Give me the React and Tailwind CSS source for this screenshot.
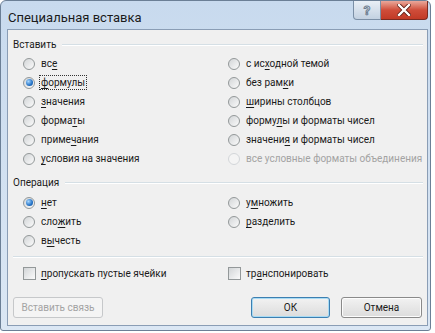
import React from "react";

const font = { fontFamily: 'Roboto, "Noto Sans", sans-serif' };

function Label({ text, u, disabled }) {
  // u = index of the underlined access-key letter
  return (
    <span className={`whitespace-nowrap ${disabled ? "text-[#a3a3a3]" : "text-[#1b1b1b]"}`}>
      {text.slice(0, u)}
      <span className="underline underline-offset-2">{text[u]}</span>
      {text.slice(u + 1)}
    </span>
  );
}

function Radio({ checked, disabled }) {
  return (
    <span
      className={`w-[12px] h-[12px] rounded-full border flex items-center justify-center shrink-0 ${
        disabled
          ? "border-[#d3d6d9] bg-[#f4f4f4]"
          : "border-[#939899] bg-gradient-to-br from-[#d2d5d7] to-[#fbfbfb]"
      }`}
    >
      {checked && (
        <span className="w-[7px] h-[7px] rounded-full bg-[radial-gradient(circle_at_35%_35%,#a8d8ff,#2472c6_60%,#0d4a8f)]" />
      )}
    </span>
  );
}

function RadioRow({ text, u, checked, disabled, focus }) {
  return (
    <div className="h-[19px] flex items-center gap-[5px]">
      <Radio checked={checked} disabled={disabled} />
      <span className={`leading-[13px] px-[1px] ${focus ? "outline outline-1 outline-dotted outline-[#333]" : ""}`}>
        <Label text={text} u={u} disabled={disabled} />
      </span>
    </div>
  );
}

function Check({ text, u }) {
  return (
    <div className="h-[19px] flex items-center gap-[5px]">
      <span className="w-[13px] h-[13px] border border-[#939899] bg-gradient-to-br from-[#d2d5d7] to-[#fbfbfb] shrink-0" />
      <Label text={text} u={u} />
    </div>
  );
}

function Header({ title }) {
  return (
    <div className="h-[19px] flex items-center gap-[6px]">
      <span className="text-[#1b1b1b]">{title}</span>
      <div className="flex-1 h-[2px] border-t border-[#d5dfe5] border-b border-b-white mr-[4px]" />
    </div>
  );
}

function Button({ children, primary, disabled, className = "" }) {
  const base = "h-[21px] rounded-[3px] border flex items-center justify-center whitespace-nowrap";
  const style = disabled
    ? "border-[#c6c8ca] bg-[#f4f4f4] text-[#a3a3a3]"
    : primary
    ? "border-[#3c7fb1] bg-gradient-to-b from-[#f2f2f2] to-[#dcdcdc] text-[#1b1b1b] shadow-[inset_0_0_0_1px_#a8dbf4]"
    : "border-[#8a8a8a] bg-gradient-to-b from-[#f2f2f2] to-[#dcdcdc] text-[#1b1b1b] shadow-[inset_0_0_0_1px_#fcfcfc]";
  return <div className={`${base} ${style} ${className}`}>{children}</div>;
}

export default function App() {
  const left = [
    { text: "все", u: 2 },
    { text: "формулы", u: 0, checked: true, focus: true },
    { text: "значения", u: 0 },
    { text: "форматы", u: 5 },
    { text: "примечания", u: 5 },
    { text: "условия на значения", u: 0 },
  ];
  const right = [
    { text: "с исходной темой", u: 4 },
    { text: "без рамки", u: 7 },
    { text: "ширины столбцов", u: 0 },
    { text: "формулы и форматы чисел", u: 5 },
    { text: "значения и форматы чисел", u: 7 },
    { text: "все условные форматы объединения", u: 99, disabled: true },
  ];

  return (
    <div className="w-[435px] h-[333px] bg-white text-[10px]" style={font}>
      <div className="w-[431px] h-[331px] rounded-t-[6px] rounded-b-[3px] border border-[#6b7f96] bg-gradient-to-b from-[#c8daee] to-[#dbe7f4] flex flex-col">
        {/* title bar */}
        <div className="h-[28px] shrink-0 flex items-start">
          <div className="pl-[7px] pt-[7px] text-[13px] text-[#1b1b1b] flex-1">Специальная вставка</div>
          <div className="w-[28px] h-[19px] rounded-bl-[4px] border border-t-0 border-[#7b8fa6] bg-gradient-to-b from-[#e9eff6] to-[#c3d1e1] flex items-center justify-center">
            <span className="text-[13px] font-bold text-transparent [-webkit-text-stroke:1px_#6f7e90] leading-none">?</span>
          </div>
          <div className="w-[47px] h-[19px] mr-[2px] rounded-br-[4px] border border-t-0 border-l-0 border-[#7a2b22] bg-gradient-to-b from-[#e9a89b] via-[#cf4d3a] to-[#c23a26] flex items-center justify-center">
            <svg width="14" height="12" viewBox="0 0 14 12">
              <path d="M2 1 L12 11 M12 1 L2 11" stroke="#5a1a12" strokeWidth="4" strokeLinecap="square" />
              <path d="M2 1 L12 11 M12 1 L2 11" stroke="#fff" strokeWidth="2.4" strokeLinecap="square" />
            </svg>
          </div>
        </div>

        {/* client area */}
        <div className="ml-[6px] mr-[2px] h-[297px] shrink-0 border border-[#8a9db5] bg-[#f0f0f0] pl-[5px] pt-[5px] flex flex-col">
          <Header title="Вставить" />
          <div className="grid grid-cols-[205px_1fr] pl-[10px]">
            <div>
              {left.map((r) => (
                <RadioRow key={r.text} {...r} />
              ))}
            </div>
            <div>
              {right.map((r) => (
                <RadioRow key={r.text} {...r} />
              ))}
            </div>
          </div>

          <div className="mt-[5px]">
            <Header title="Операция" />
          </div>
          <div className="grid grid-cols-[205px_1fr] pl-[10px] mt-[1px]">
            <div>
              <RadioRow text="нет" u={0} checked />
              <RadioRow text="сложить" u={3} />
              <RadioRow text="вычесть" u={1} />
            </div>
            <div>
              <RadioRow text="умножить" u={1} />
              <RadioRow text="разделить" u={0} />
            </div>
          </div>

          <div className="mt-[6px] mr-[4px] h-[2px] border-t border-[#d5dfe5] border-b border-b-white" />

          <div className="grid grid-cols-[205px_1fr] pl-[10px] mt-[6px]">
            <Check text="пропускать пустые ячейки" u={0} />
            <Check text="транспонировать" u={2} />
          </div>

          <div className="mt-[14px] flex items-center pr-[5px]">
            <Button disabled className="w-[90px]">Вставить связь</Button>
            <div className="flex-1" />
            <Button primary className="w-[79px]">ОК</Button>
            <Button className="w-[81px] ml-[11px]">Отмена</Button>
          </div>
        </div>
      </div>
    </div>
  );
}
